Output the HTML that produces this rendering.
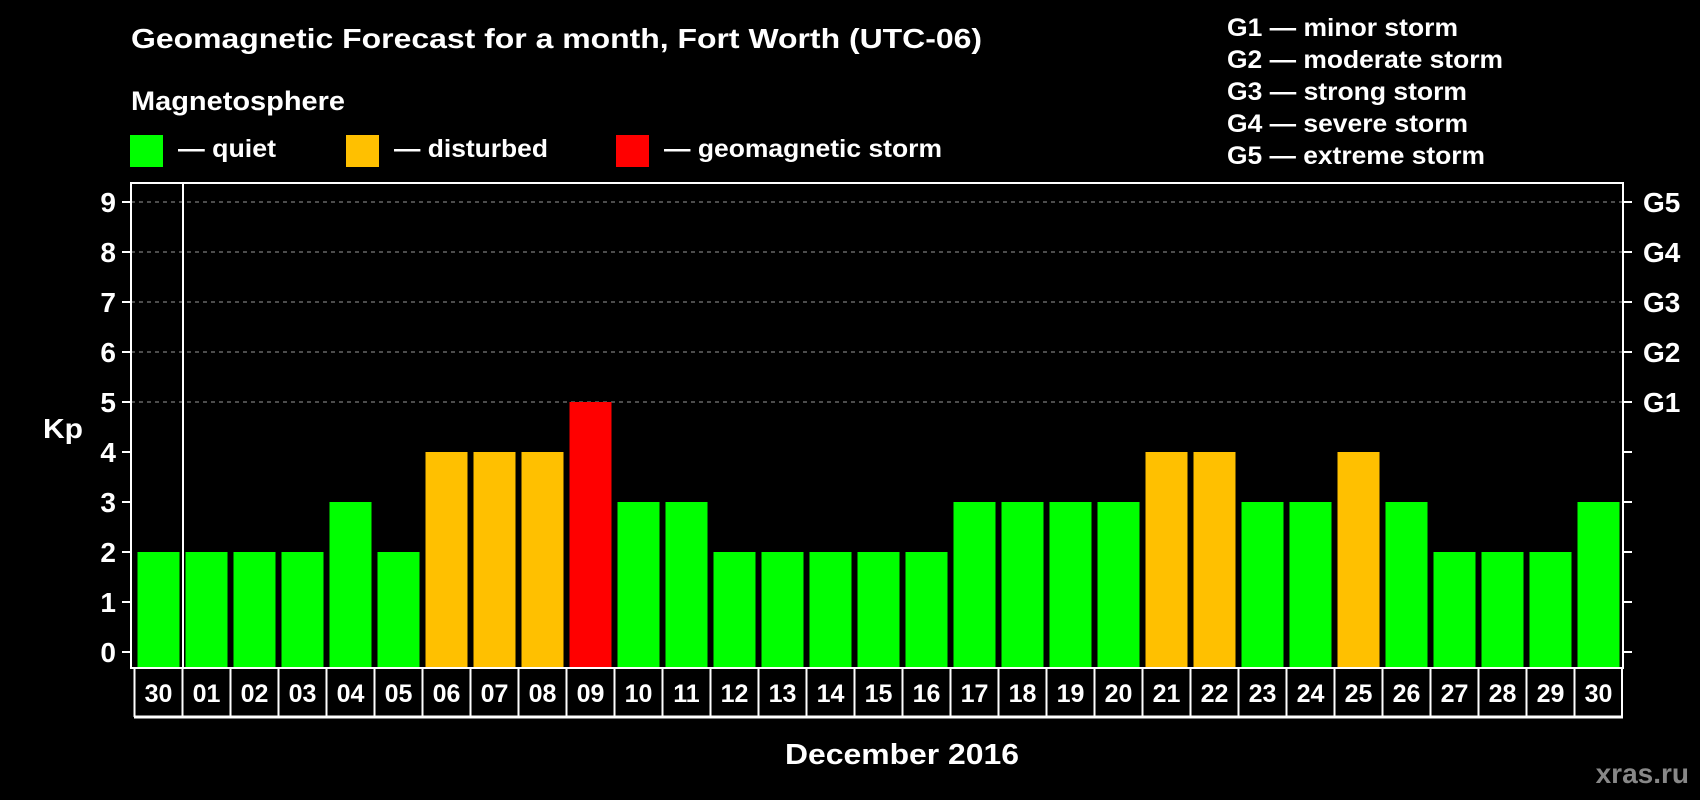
<!DOCTYPE html>
<html><head><meta charset="utf-8"><style>
html,body{margin:0;padding:0;background:#000;width:1700px;height:800px;overflow:hidden}
svg{display:block}
text{font-family:"Liberation Sans",Arial,sans-serif;font-weight:bold;fill:#fff}
</style></head><body>
<svg width="1700" height="800" xmlns="http://www.w3.org/2000/svg">
<rect width="1700" height="800" fill="#000"/>
<text x="131" y="48" font-size="28" textLength="851" lengthAdjust="spacingAndGlyphs">Geomagnetic Forecast for a month, Fort Worth (UTC-06)</text>
<text x="131" y="110" font-size="27" textLength="214" lengthAdjust="spacingAndGlyphs">Magnetosphere</text>
<rect x="130" y="135" width="33" height="32" fill="#00ff00"/>
<text x="178" y="157" font-size="25" textLength="98" lengthAdjust="spacingAndGlyphs">— quiet</text>
<rect x="346" y="135" width="33" height="32" fill="#ffc000"/>
<text x="394" y="157" font-size="25" textLength="154" lengthAdjust="spacingAndGlyphs">— disturbed</text>
<rect x="616" y="135" width="33" height="32" fill="#ff0000"/>
<text x="664" y="157" font-size="25" textLength="278" lengthAdjust="spacingAndGlyphs">— geomagnetic storm</text>
<g font-size="25">
<text x="1227" y="36" textLength="231" lengthAdjust="spacingAndGlyphs">G1 — minor storm</text>
<text x="1227" y="68" textLength="276" lengthAdjust="spacingAndGlyphs">G2 — moderate storm</text>
<text x="1227" y="100" textLength="240" lengthAdjust="spacingAndGlyphs">G3 — strong storm</text>
<text x="1227" y="132" textLength="241" lengthAdjust="spacingAndGlyphs">G4 — severe storm</text>
<text x="1227" y="164" textLength="258" lengthAdjust="spacingAndGlyphs">G5 — extreme storm</text>
</g>
<g stroke="#999" stroke-width="1" stroke-dasharray="4,4">
<line x1="131" x2="1623" y1="202" y2="202"/>
<line x1="131" x2="1623" y1="252" y2="252"/>
<line x1="131" x2="1623" y1="302" y2="302"/>
<line x1="131" x2="1623" y1="352" y2="352"/>
<line x1="131" x2="1623" y1="402" y2="402"/>
</g>
<g id="bars"></g>
<rect x="131" y="183" width="1492" height="485" fill="none" stroke="#fff" stroke-width="2"/>
<line x1="183" y1="183" x2="183" y2="668" stroke="#fff" stroke-width="2"/>
<g id="ticks" stroke="#fff" stroke-width="2"></g>
<g id="ylab" font-size="28"></g>
<g id="days" font-size="25"></g>
<line x1="134" y1="717" x2="1623" y2="717" stroke="#fff" stroke-width="3"/>
<text x="43" y="438" font-size="28" textLength="40" lengthAdjust="spacingAndGlyphs">Kp</text>
<text x="785" y="764" font-size="29" textLength="234" lengthAdjust="spacingAndGlyphs">December 2016</text>
<text x="1689" y="783" font-size="28" text-anchor="end" style="fill:#888">xras.ru</text>
</svg>
<script>
var ns="http://www.w3.org/2000/svg";
function el(p,t,a,txt){var e=document.createElementNS(ns,t);for(var k in a)e.setAttribute(k,a[k]);if(txt!=null)e.textContent=txt;document.getElementById(p).appendChild(e);return e;}
var d=[2,2,2,2,3,2,4,4,4,5,3,3,2,2,2,2,2,3,3,3,3,4,4,3,3,4,3,2,2,2,3];
var labels=["30","01","02","03","04","05","06","07","08","09","10","11","12","13","14","15","16","17","18","19","20","21","22","23","24","25","26","27","28","29","30"];
for(var i=0;i<31;i++){
 var k=d[i],c=k>=5?"#ff0000":(k==4?"#ffc000":"#00ff00");
 var x=137.5+48*i,y=652-50*k;
 el("bars","rect",{x:x,y:y,width:42,height:668-y,fill:c});
 el("days","text",{x:x+21,y:702,"text-anchor":"middle"},labels[i]);
 el("ticks","line",{x1:134.5+48*i,x2:134.5+48*i,y1:668,y2:717});
}
el("ticks","line",{x1:1622,x2:1622,y1:668,y2:717});
for(var k=0;k<=9;k++){
 var y=652-50*k;
 el("ticks","line",{x1:122,x2:131,y1:y,y2:y});
 el("ticks","line",{x1:1623,x2:1632,y1:y,y2:y});
 el("ylab","text",{x:116,y:y+10,"text-anchor":"end"},String(k));
 if(k>=5) el("ylab","text",{x:1643,y:y+10},"G"+(k-4));
}
</script>
</body></html>
